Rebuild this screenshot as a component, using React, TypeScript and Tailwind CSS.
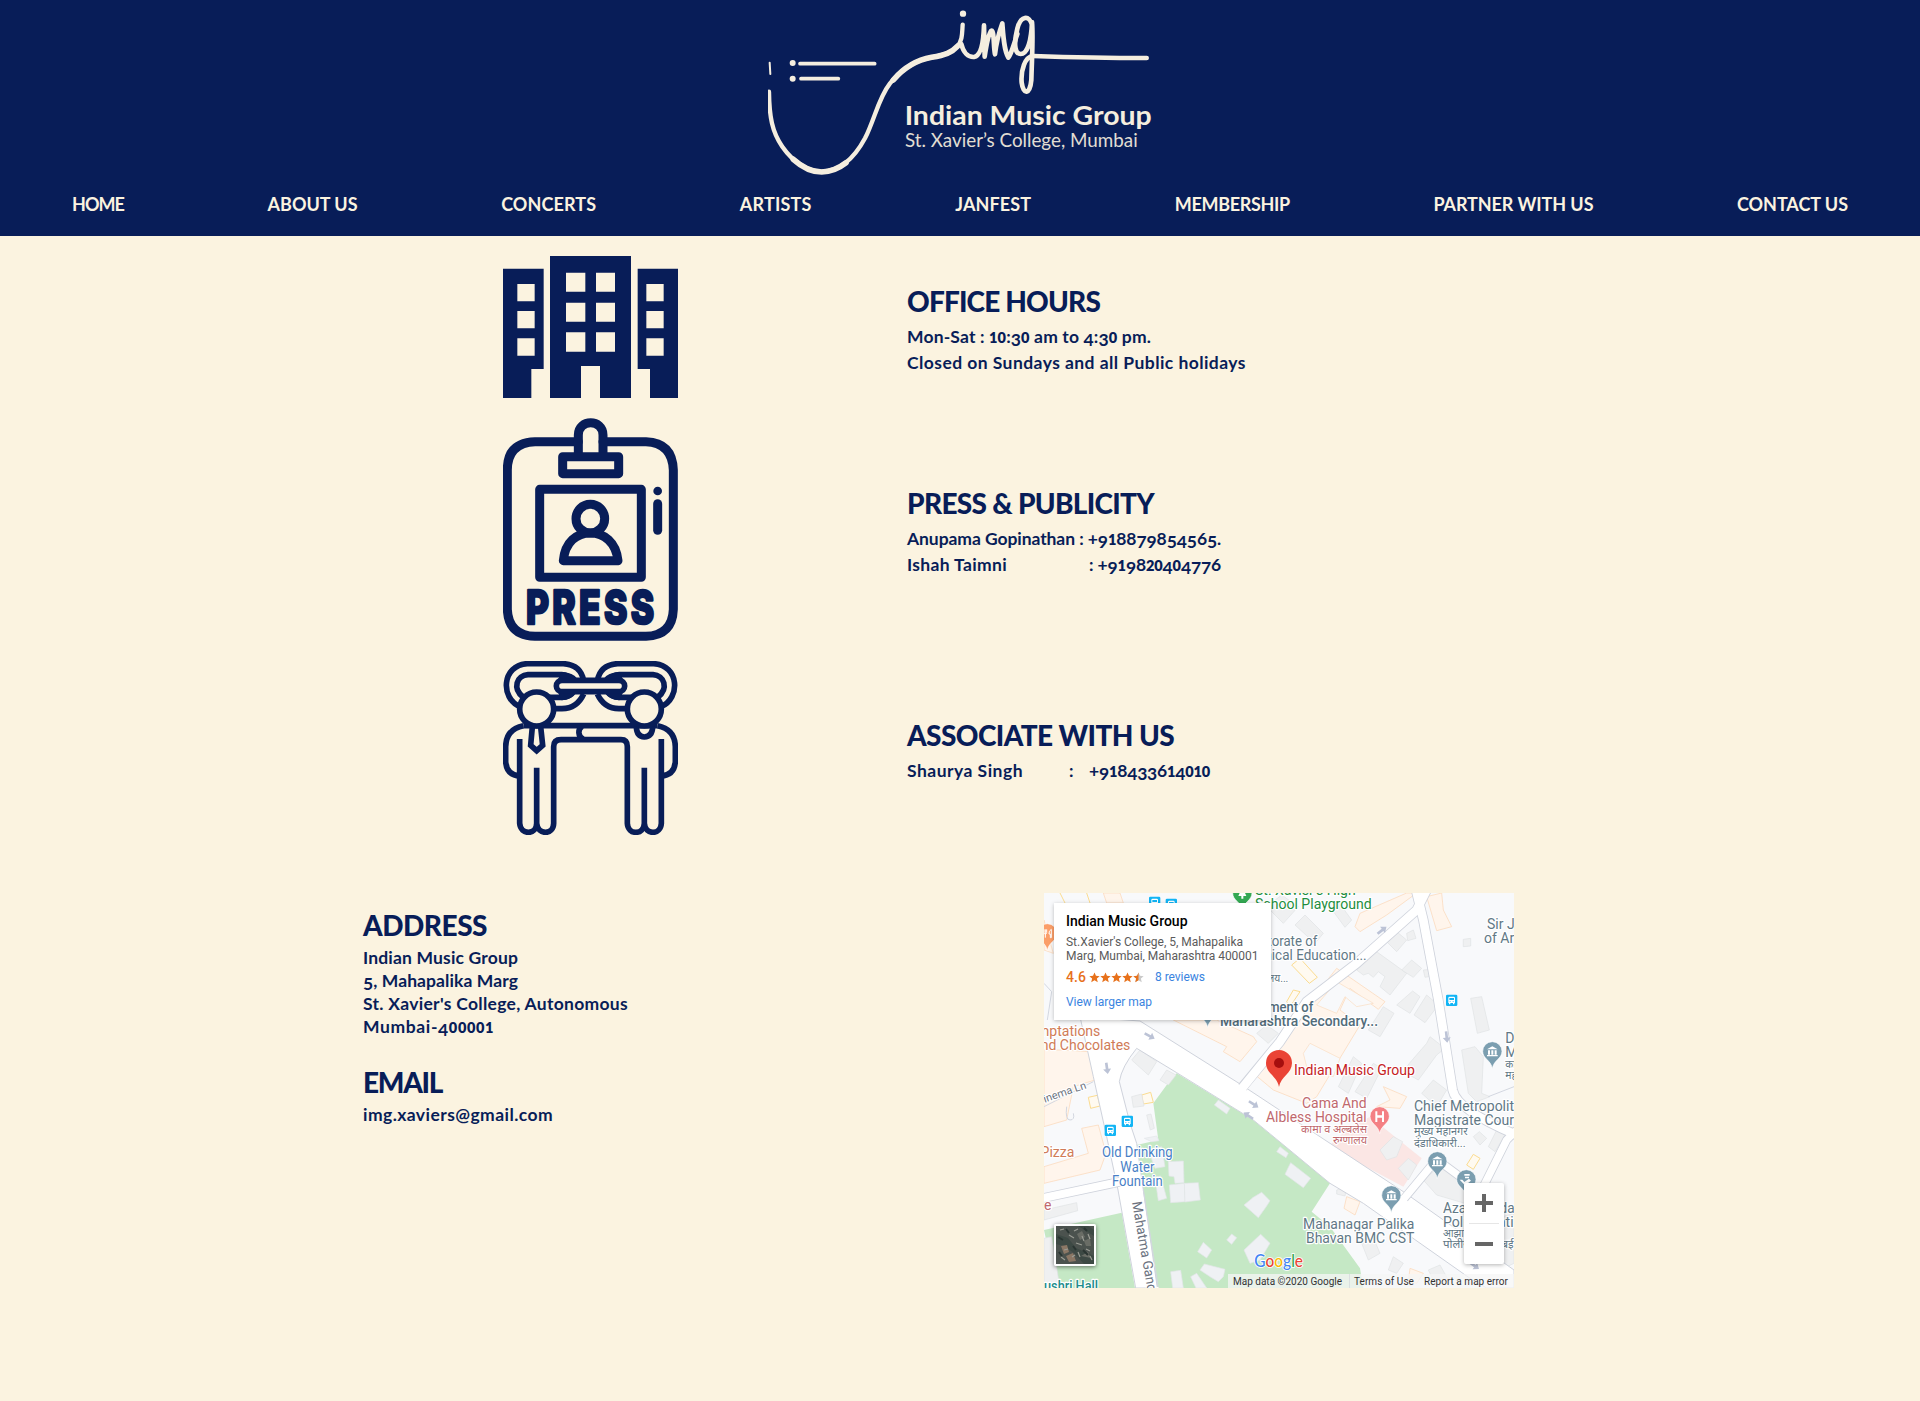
import { useLayoutEffect, useRef, useState, type ReactNode } from "react";

/** Tracks its text so that the line comes out exactly `w` pixels wide. */
function Fit({ w, text, className = "" }: { w: number; text: string; className?: string }) {
  const ref = useRef<HTMLSpanElement>(null);
  const [spacing, setSpacing] = useState(0);
  useLayoutEffect(() => {
    if (ref.current) {
      const natural = ref.current.getBoundingClientRect().width;
      setSpacing((w - natural) / text.length);
    }
  }, [w, text]);
  return (
    <span ref={ref} className={"inline-block whitespace-pre " + className} style={{ letterSpacing: spacing }}>
      {[...text].map((c, i) => {
        if ("012".includes(c)) return <span key={i} className="text-[0.83em] font-extrabold leading-none">{c}</span>;
        if ("34579".includes(c)) return <span key={i} className="align-[-0.17em] leading-none">{c}</span>;
        return c;
      })}
    </span>
  );
}

const NAV: [string, number][] = [
  ["HOME", 52],
  ["ABOUT US", 90],
  ["CONCERTS", 95],
  ["ARTISTS", 72],
  ["JANFEST", 76],
  ["MEMBERSHIP", 115],
  ["PARTNER WITH US", 160],
  ["CONTACT US", 111],
];

function Heading({ text, w }: { text: string; w: number }) {
  return (
    <h2 className="h-[34px] text-[28px] leading-[34px] font-black">
      <Fit text={text} w={w} />
    </h2>
  );
}

function Logo() {
  return (
    <svg className="block h-[175px] w-[384px]" viewBox="54 0 1152 525" fill="none" stroke="#f5eedf" strokeLinecap="round" strokeLinejoin="round">
      <path d="M59 188L61 222" strokeWidth="6" />
      <path d="M57 275C58 350 66 395 97 440C130 487 175 515 215 515C265 514 310 480 345 415C375 355 385 295 420 250C455 207 500 180 545 172C585 165 605 158 622 139C638 120 636 100 638 74" strokeWidth="13" />
      <path d="M130 478C160 505 190 516 215 516C240 515 265 506 288 488M430 240C460 205 500 180 545 172C585 165 605 158 622 139" strokeWidth="17" />
      <path d="M634 132C640 158 655 172 672 171C690 168 700 140 702 76L704 170C710 130 716 100 724 92C733 90 730 140 735 163C740 120 748 95 757 70C760 110 762 150 775 173C785 160 792 130 802 102" strokeWidth="14" />
      <path d="M846 75C838 44 812 46 802 86C792 125 792 162 812 162C834 162 844 118 846 66C850 110 846 165 844 240C840 285 820 285 815 248C812 210 825 170 849 168" strokeWidth="14" />
      <path d="M849 168C940 171 1050 174 1190 174" strokeWidth="14" />
      <circle cx="639" cy="41" r="9.5" fill="#f5eedf" stroke="none" />
      <circle cx="128" cy="189" r="9" fill="#f5eedf" stroke="none" />
      <circle cx="128" cy="236" r="9" fill="#f5eedf" stroke="none" />
      <path d="M150 191H374" strokeWidth="11" />
      <path d="M153 236H265" strokeWidth="11" />
      <g fill="#f5eedf" stroke="none" fontFamily="Lato, sans-serif">
        <text x="464" y="375" fontSize="82" fontWeight="700" textLength="741" lengthAdjust="spacingAndGlyphs">Indian Music Group</text>
        <text x="465" y="442" fontSize="55" fontWeight="400" textLength="698" lengthAdjust="spacingAndGlyphs" opacity="0.92">St. Xavier’s College, Mumbai</text>
      </g>
    </svg>
  );
}

function OfficeIcon() {
  return (
    <svg className="block h-[142px] w-[175px]" viewBox="39 33 525 426" fill="#081d58">
      <path fillRule="evenodd" d="M39 71H161V372H124V459H39ZM82 117V169H134V117ZM82 198V250H134V198ZM82 280V332H134V280Z" />
      <path fillRule="evenodd" d="M180 33H423V459H330V363H273V459H180ZM228 83V140H286V83ZM318 83V140H375V83ZM228 173V230H286V173ZM318 173V230H375V173ZM228 262V320H286V262ZM318 262V320H375V262Z" />
      <path fillRule="evenodd" d="M443 71H564V459H480V372H443ZM469 117V169H521V117ZM469 198V250H521V198ZM469 280V332H521V280Z" />
    </svg>
  );
}

function PressIcon() {
  return (
    <svg className="block h-[223px] w-[175px]" viewBox="39 24 525 669" fill="none" stroke="#081d58" strokeWidth="27" strokeLinejoin="round" strokeLinecap="round">
      <path d="M265 95H135Q52 98 52 180V598Q55 676 135 679H468Q547 676 550 598V180Q547 98 468 95H339" />
      <path d="M265 138V75C265 26 339 26 339 75V138" />
      <rect x="218" y="140" width="168" height="51" />
      <rect x="149" y="238" width="305" height="264" />
      <circle cx="301" cy="326" r="43" />
      <path d="M220 452C225 396 260 369 301 369S378 396 384 452Z" />
      <path d="M503 281V361" />
      <circle cx="503" cy="243" r="13" fill="#081d58" stroke="none" />
      <text x="108" y="642" fontFamily="Inter, sans-serif" fontWeight="800" fontSize="138" letterSpacing="13" strokeWidth="8" fill="#081d58" textLength="394" lengthAdjust="spacingAndGlyphs">PRESS</text>
    </svg>
  );
}

function AssociateIcon() {
  return (
    <svg className="block h-[174px] w-[175px]" viewBox="39 33 525 522" fill="none" stroke="#081d58" strokeWidth="17">
      <path d="M90 170C30 145 35 45 112 41H220C255 43 275 60 281 92M281 132C268 160 245 176 216 176H190" />
      <path d="M513 170C573 145 568 45 491 41H383C348 43 328 60 322 92M322 132C335 160 358 176 387 176H413" />
      <path d="M100 142C66 115 80 76 114 74H215Q235 74 250 92M178 142H215Q235 142 248 128" />
      <path d="M503 142C537 115 523 76 489 74H388Q368 74 353 92M425 142H388Q368 142 355 128" />
      <rect x="199" y="91" width="205" height="34" rx="17" />
      <path d="M215 66Q250 68 262 86H205ZM205 130H258Q245 150 215 151ZM388 66Q353 68 341 86H398ZM398 130H345Q358 150 388 151Z" fill="#081d58" stroke="none" />
      <path d="M100 227Q48 238 47 290V335Q50 376 90 378M503 227Q555 238 556 290V335Q553 376 513 378" />
      <path d="M100 227H503M89 267V520C92 556 139 556 140 520V353M140 520C144 556 190 556 191 520V290Q191 269 213 269H393Q412 269 412 290V520C414 556 461 556 463 520V353M463 520C466 556 512 556 514 520V267M276 229C263 238 263 259 280 268" />
      <path d="M127 230L122 286L140 302L158 286L152 230" />
      <path d="M439 230Q440 260 463 261Q487 260 488 230" />
      <circle cx="140" cy="177" r="51" fill="#fbf3e0" />
      <circle cx="463" cy="177" r="51" fill="#fbf3e0" />
    </svg>
  );
}

function Pin({ x, y, color, children }: { x: number; y: number; color: string; children?: ReactNode }) {
  return (
    <g transform={`translate(${x} ${y})`}>
      <path d="M0 51C-4 25 -29 22 -29 -1A29 29 0 0 1 29 -1C29 22 4 25 0 51Z" fill={color} stroke="#fff" strokeWidth="2" />
      {children}
    </g>
  );
}

const Museum = () => (
  <path d="M-16 -7L0 -16L16 -7ZM-13 -4H-7V9H-13ZM-3 -4H3V9H-3ZM7 -4H13V9H7ZM-16 10H16V14H-16Z" fill="#fff" />
);

function Bus({ x, y }: { x: number; y: number }) {
  return (
    <g transform={`translate(${x} ${y})`}>
      <rect x="-17" y="-17" width="34" height="34" rx="4" fill="#12b5f5" />
      <path fillRule="evenodd" fill="#fff" d="M-10 -7Q-10 -11 -6 -11H6Q10 -11 10 -7V8H8V12H4V8H-4V12H-8V8H-10ZM-7 -7V-1H7V-7ZM-6 3V5H-3V3ZM3 3V5H6V3Z" />
    </g>
  );
}

function Arrow({ x, y, r }: { x: number; y: number; r: number }) {
  return <path transform={`translate(${x} ${y}) rotate(${r})`} d="M-17 -4H2V-12L17 0L2 12V4H-17Z" fill="#bcc3d6" />;
}

function Label({ x, y, w, size = 42, fill = "#617886", anchor = "start", weight = 400, children }: {
  x: number; y: number; w?: number; size?: number; fill?: string; anchor?: "start" | "middle" | "end"; weight?: number; children: ReactNode;
}) {
  return (
    <text x={x} y={y} textLength={w} lengthAdjust="spacingAndGlyphs" fontSize={size} fill={fill} textAnchor={anchor} fontWeight={weight} stroke="#fff" strokeWidth="7" strokeLinejoin="round" paintOrder="stroke">
      {children}
    </text>
  );
}

const BUILDINGS = [
  "M275 510L300 480L350 515L325 555Z", "M360 570L380 540L408 555L385 585Z", "M275 620L305 612L312 648L280 652Z",
  "M320 675L333 672L343 715L331 720Z", "M680 50L725 15L775 50L730 100Z", "M765 105L795 75L850 130L825 160Z",
  "M873 55L895 35L935 90L915 112Z", "M1040 155L1070 125L1100 150L1070 185Z", "M1100 130L1120 120L1128 145L1103 152Z",
  "M950 240L1000 178L1100 250L1050 315L1020 290L1035 260L1015 245L1000 262L985 250L970 255Z",
  "M1085 240L1115 210L1145 235L1120 262Z", "M1070 345L1118 303L1140 320L1110 370Z", "M1122 375L1160 315L1195 345L1155 398Z",
  "M985 420L1030 350L1062 370L1020 440Z", "M1292 325L1325 320L1348 420L1312 430Z", "M1270 148L1292 145L1292 168L1270 170Z",
  "M1108 520L1160 460L1170 440L1215 475L1190 495L1135 570L1090 545Z", "M1265 480L1305 470L1330 500L1325 610L1350 620L1310 635L1285 610Z",
  "M895 590L940 500L965 520L925 610Z", "M945 605L1000 520L1025 535L980 625Z", "M1145 610L1180 570L1220 600L1190 650Z",
  "M650 430L680 405L715 430L685 460Z", "M1020 780L1060 740L1088 755L1070 800L1040 810Z", "M1075 835L1105 805L1130 825L1105 870Z",
  "M1150 870L1210 820L1275 865V940L1190 915Z", "M890 900L920 890L915 918L890 912Z", "M965 1060L1005 1055L1020 1090L985 1110Z",
  "M1060 1100L1090 1120L1070 1150L1045 1140Z", "M1165 1140L1200 1125L1225 1170L1190 1190Z", "M12 960L110 938L113 962L12 990Z",
  "M1320 1000L1422 970V1120L1380 1140Z", "M1345 770L1370 720L1395 735L1365 785Z", "M1300 740L1318 725L1340 745L1320 765Z",
  "M12 1045L35 1040L60 1194H12Z", "M1150 240L1175 238L1178 258L1155 262Z",
];

const PARK_BUILDINGS = [
  "M523 645L535 630L570 655L560 672Z", "M313 745L350 738L357 752L335 755Z", "M325 780L365 770L375 830L345 835Z",
  "M385 815L430 813L432 878L405 880L402 860L387 858Z", "M388 885L433 880L435 935L392 938Z", "M433 880L475 878L481 930L435 936Z",
  "M345 862L362 858L380 925L355 932Z", "M735 853L752 818L812 865L790 893Z", "M612 945L640 922L665 907L690 932L680 948L655 983Z",
  "M612 1080L662 1033L690 1060L660 1110L630 1120Z", "M473 1085L490 1057L515 1080L500 1104Z", "M560 1050L575 1032L590 1043L575 1063Z",
  "M480 1140L493 1122L555 1138L550 1160L535 1175L510 1160Z", "M452 1160L470 1150L500 1194H468Z", "M392 1145L422 1141L430 1194H398Z",
  "M710 785L720 770L745 790L738 803Z",
];

const ORANGE = [
  "M945 110L960 70L1100 9H1130L1040 75L960 125Z", "M1160 20L1205 9L1210 60L1235 110L1190 122Z",
  "M640 550L890 235L1035 335L1015 358L930 295L900 360L960 405L830 620L800 640L700 600Z",
  "M400 390H530L640 440L650 455L600 515L550 485L560 470Z", "M12 480H70L145 485L165 570L100 590L80 690L12 710Z",
  "M125 715L175 705L198 790L180 840L12 880V830L145 790Z", "M920 920L960 935L945 975L912 955Z",
  "M1010 650L1050 630L1030 590L1100 620L1080 655Z", "M1110 1135L1150 1150L1130 1180L1105 1175Z", "M12 90L40 190L12 180Z",
  "M190 9H240L250 39H200Z",
];

function MapDrawing() {
  return (
    <svg className="block h-[395px] w-[470px]" viewBox="12 9 1410 1185" fontFamily='Roboto, "Noto Sans", sans-serif'>
      <rect x="12" y="9" width="1410" height="1185" fill="#f8f9fb" />
      <path d="M12 1020L245 968L285 1194H50Z" fill="#c5e8c5" />
      <path d="M410 550L640 690L870 880L815 965L870 1010L960 1135L970 1194H345L290 765L355 750L340 640L380 585Z" fill="#c5e8c5" />
      <path d="M865 770L920 720L990 680L1145 805L1090 890Z" fill="#fbe6e4" />
      {ORANGE.map((d) => <path key={d} d={d} fill="#fff5ec" stroke="#fbdcc0" strokeWidth="2.5" />)}
      <path d="M830 345L890 275L1000 340L950 350L915 320L890 370Z M790 490L810 460L900 505L880 560L800 530Z" fill="#f8f9fb" stroke="#fbdcc0" strokeWidth="2" />
      <g fill="#fffaf0" stroke="#fbdc90" strokeWidth="3">
        <path d="M755 225L780 205L832 262L808 280Z" /><path d="M740 335L760 300L780 305L750 350Z" />
        <path d="M305 615L332 607L340 637L310 642Z" /><path d="M145 622L172 616L180 648L152 655Z" />
        <path d="M1280 825L1300 793L1320 805L1300 838Z" /><path d="M60 9L75 39M140 9L150 39" />
      </g>
      {BUILDINGS.map((d) => <path key={d} d={d} fill="#eff0f1" stroke="#e0e2e4" strokeWidth="2" />)}
      {PARK_BUILDINGS.map((d) => <path key={d} d={d} fill="#eff1f4" stroke="#e2e5e9" strokeWidth="2" />)}
      <path d="M120 380L160 560L200 740L234 900L287 1194H352L290 760L270 700L238 575Q245 530 290 475L410 548L640 690L870 880L970 940L1290 1165L1340 1194H1422V1140L1090 905L597 580L300 393Z" fill="#fff" stroke="#cfd3dc" strokeWidth="3" />
      <g fill="none" strokeLinejoin="round">
        <g stroke="#cfd3dc">
          <path d="M607 592L720 455L800 335L950 220L1130 60L1160 0" strokeWidth="31" />
          <path d="M1128 0L1150 90L1195 330L1238 600Q1250 660 1430 735" strokeWidth="31" />
          <path d="M1093 925L1190 808L1260 860M1430 720L1400 750L1330 890" strokeWidth="27" />
          <path d="M5 925L240 875" strokeWidth="29" />
        </g>
        <g stroke="#fff">
          <path d="M600 602L720 455L800 335L950 220L1130 60L1160 0" strokeWidth="26" />
          <path d="M1128 0L1150 90L1195 330L1238 600Q1250 660 1430 735" strokeWidth="26" />
          <path d="M1080 940L1190 808L1260 860M1430 720L1400 750L1330 890" strokeWidth="22" />
          <path d="M5 925L245 874" strokeWidth="24" />
        </g>
        <path d="M12 280L35 305L22 390M80 650Q75 690 90 690Q105 690 100 670M12 650L160 575M1345 620L1422 590M310 900L355 1194" stroke="#d3d7e0" strokeWidth="3" />
      </g>
      <Arrow x={329} y={438} r={28} /><Arrow x={201} y={535} r={82} /><Arrow x={641} y={643} r={33} />
      <Arrow x={625} y={677} r={213} /><Arrow x={1026} y={121} r={-38} /><Arrow x={1220} y={441} r={84} /><Arrow x={1303} y={1127} r={35} />
      <Bus x={344} y={37} /><Bus x={394} y={43} /><Bus x={262} y={694} /><Bus x={211} y={721} /><Bus x={1235} y={331} />
      <Pin x={22} y={131} color="#fb9e68"><path d="M-10 -13V-3Q-10 1 -6 1V12M-2 -13V-3Q-2 1 -6 1V-13M12 -13Q4 -9 5 1H9V12H12Z" fill="none" stroke="#fff" strokeWidth="3" /></Pin>
      <Pin x={607} y={10} color="#34a853"><path d="M0 -20L12 8H3V16H-3V8H-12Z" fill="#fff" /></Pin>
      <Pin x={503} y={362} color="#7b9eb0" />
      <Pin x={1357} y={485} color="#7b9eb0"><Museum /></Pin>
      <Pin x={1192} y={815} color="#7b9eb0"><Museum /></Pin>
      <Pin x={1054} y={917} color="#7b9eb0"><Museum /></Pin>
      <Pin x={1279} y={869} color="#7b9eb0"><path d="M-6 -17H10V-12H-6ZM-4 -9H8V-4H-4ZM-20 0L-12 0L-6 7L8 -3L14 3L-4 17Z" fill="#fff" /></Pin>
      <Pin x={1019} y={680} color="#f48084"><path d="M-13 -16H-7V-4H7V-16H13V16H7V3H-7V16H-13Z" fill="#fff" /></Pin>
      <Label x={645} y={16} w={302} fill="#1e8e3e">St. Xavier’s High</Label>
      <Label x={645} y={58} w={350} fill="#1e8e3e">School Playground</Label>
      <Label x={832} y={168} anchor="end" w={240}>Directorate of</Label>
      <Label x={980} y={210} anchor="end" w={394}>Technical Education...</Label>
      <Label x={745} y={277} anchor="end" size={31}>कार्यालय...</Label>
      <Label x={820} y={367} anchor="end" w={252} fill="#526c7a" weight={500}>Department of</Label>
      <Label x={540} y={409} w={474} fill="#526c7a" weight={500}>Maharashtra Secondary...</Label>
      <Label x={1341} y={117}>Sir J</Label>
      <Label x={1332} y={159}>of Art</Label>
      <Label x={1396} y={460}>Dr</Label>
      <Label x={1396} y={501}>Mu</Label>
      <Label x={1396} y={533} size={31}>का</Label>
      <Label x={1396} y={566} size={31}>महा</Label>
      <Label x={181} y={438} anchor="end" fill="#d07b57">Temptations</Label>
      <Label x={271} y={480} anchor="end" w={292} fill="#d07b57">and Chocolates</Label>
      <Label x={103} y={801} anchor="end" fill="#d07b57">Pizza</Label>
      <Label x={12} y={960} fill="#c0686d">e</Label>
      <Label x={292} y={801} anchor="middle" w={212} fill="#4980c6">Old Drinking</Label>
      <Label x={292} y={846} anchor="middle" w={102} fill="#4980c6">Water</Label>
      <Label x={292} y={888} anchor="middle" w={152} fill="#4980c6">Fountain</Label>
      <Label x={980} y={654} anchor="end" w={194} fill="#c0686d">Cama And</Label>
      <Label x={980} y={696} anchor="end" w={302} fill="#c0686d">Albless Hospital</Label>
      <Label x={981} y={729} anchor="end" w={198} size={31} fill="#c0686d">कामा व अल्बलेस</Label>
      <Label x={981} y={763} anchor="end" w={102} size={31} fill="#c0686d">रुग्णालय</Label>
      <Label x={1122} y={663} w={300}>Chief Metropolit</Label>
      <Label x={1122} y={705} w={300}>Magistrate Cour</Label>
      <Label x={1122} y={736} w={161} size={31}>मुख्य महानगर</Label>
      <Label x={1122} y={770} w={155} size={31}>दंडाधिकारी...</Label>
      <Label x={1123} y={1017} anchor="end" w={334}>Mahanagar Palika</Label>
      <Label x={1123} y={1059} anchor="end" w={325}>Bhavan BMC CST</Label>
      <Label x={1209} y={969} w={215}>Azad Maida</Label>
      <Label x={1209} y={1011} w={212}>Police Stati</Label>
      <Label x={1209} y={1042} size={31}>आझाद</Label>
      <Label x={1209} y={1075} w={212} size={31}>पोलीस ठाणे मुंबई</Label>
      <Label x={762} y={555} w={363} fill="#c5221f">Indian Music Group</Label>
      <Label x={12} y={1203} w={162} fill="#218c8a" weight={500}>ushri Hall</Label>
      <g transform="translate(-6 645) rotate(-19)"><Label x={0} y={0} w={155} size={32} fill="#6b7280">Cinema Ln</Label></g>
      <g transform="translate(276 937) rotate(80)"><Label x={0} y={0} w={305} size={41} fill="#6b7280">Mahatma Gandhi</Label></g>
      <path d="M717 591C712 560 678 550 678 519A39 39 0 0 1 756 519C756 550 722 560 717 591Z" fill="#ea4335" />
      <circle cx="717" cy="519" r="15" fill="#a50e0e" />
      <text x="643" y="1131" fontSize="50" fontWeight="500" fontFamily="Lato, sans-serif" textLength="146" lengthAdjust="spacingAndGlyphs" stroke="#fff" strokeWidth="5" paintOrder="stroke">
        <tspan fill="#4285f4">G</tspan><tspan fill="#ea4335">o</tspan><tspan fill="#fbbc05">o</tspan><tspan fill="#4285f4">g</tspan><tspan fill="#34a853">l</tspan><tspan fill="#ea4335">e</tspan>
      </text>
    </svg>
  );
}

const STAR = "M12 1l3.2 7.4 8.1.7-6.1 5.3 1.9 7.9L12 18.1l-7.1 4.2 1.9-7.9-6.1-5.3 8.1-.7z";

function Satellite() {
  return (
    <svg className="block size-full" viewBox="0 0 38 38">
      <rect width="38" height="38" fill="#4b524e" />
      <path d="M0 8L12 12L20 22L38 30V38H28L18 27L8 20L0 18ZM22 0L38 10V4L32 0Z" fill="#3d4944" />
      <path d="M5 20L11 19L13 26L8 28ZM10 30L17 27L20 35L13 36Z" fill="#8b7765" />
      <path d="M21 8L26 5L29 11L24 14ZM28 15L34 12L35 20L30 20ZM25 30L32 26L35 32Z" fill="#6a6d66" />
      <path d="M4 4L8 3M18 5L22 3M13 9L18 12M26 10L28 15M32 8L34 13M20 17L26 19M30 23L34 25M8 24L12 23M5 31L9 34M22 26L24 31M16 31L19 29M34 30L36 34" stroke="#9a9c94" strokeWidth="1.2" />
      <path d="M2 11L7 14M10 3L13 7M28 2L31 5M17 20L20 24M27 24L32 29M3 26L6 30" stroke="#2a3532" strokeWidth="2" />
    </svg>
  );
}

function GoogleMap() {
  return (
    <div className="relative h-[395px] w-[470px] overflow-hidden font-['Roboto'] font-normal">
      <MapDrawing />
      <div className="absolute top-[10px] left-[10px] flex h-[117px] w-[217px] flex-col bg-white pt-[10px] pl-3 text-[12px] leading-[14px] text-[#5b5b5b] shadow-[0_1px_4px_rgba(0,0,0,0.25)]">
        <div className="h-4 text-[14px] leading-4 font-medium text-black"><Plain text="Indian Music Group" w={121.5} /></div>
        <div className="mt-[6px]"><Plain text="St.Xavier's College, 5, Mahapalika" w={177} /></div>
        <div><Plain text="Marg, Mumbai, Maharashtra 400001" w={192.5} /></div>
        <div className="mt-[6px] flex h-[16px] items-center text-[#e7711b]">
          <span className="text-[14px] font-medium"><Plain text="4.6" w={20} /></span>
          <svg className="ml-[3px] h-[11px] w-[55px]" viewBox="0 0 120 24">
            <defs><clipPath id="half"><rect x="96" width="12" height="24" /></clipPath></defs>
            {[0, 24, 48, 72].map((x) => <path key={x} d={STAR} transform={`translate(${x} 0)`} fill="#e7711b" />)}
            <path d={STAR} transform="translate(96 0)" fill="#c9c9c9" />
            <g clipPath="url(#half)"><path d={STAR} transform="translate(96 0)" fill="#e7711b" /></g>
          </svg>
          <span className="ml-[11px] text-[#3a84df]"><Plain text="8 reviews" w={50} /></span>
        </div>
        <div className="mt-[10px] text-[#3a84df]"><Plain text="View larger map" w={86} /></div>
      </div>
      <div className="absolute top-[331px] left-[10px] size-[42px] rounded-[2px] border-2 border-white shadow-[0_1px_4px_rgba(0,0,0,0.5)]">
        <Satellite />
      </div>
      <div className="absolute right-[10px] top-[290px] flex h-[81px] w-10 flex-col items-center rounded-[2px] bg-white text-[#666] shadow-[0_1px_4px_rgba(0,0,0,0.3)]">
        <svg className="h-10 w-10" viewBox="0 0 40 40"><path d="M11 20H29M20 11V29" stroke="#666" strokeWidth="4" /></svg>
        <div className="h-px w-[30px] bg-[#e6e6e6]" />
        <svg className="h-10 w-10" viewBox="0 0 40 40"><path d="M11 20H29" stroke="#666" strokeWidth="4" /></svg>
      </div>
      <div className="absolute right-0 bottom-0 flex h-[14px] w-[286px] bg-[#f5f5f5]/75 pl-[5px] text-[10px] leading-[15px] text-[#333]">
        <div className="w-[116px]"><Plain text="Map data ©2020 Google" w={109} /></div>
        <div className="w-[76px] border-l border-[#dadfe0] pl-1"><Plain text="Terms of Use" w={60} /></div>
        <div className="-ml-px"><Plain text="Report a map error" w={84} /></div>
      </div>
    </div>
  );
}

/** Same as Fit, with lining figures. */
function Plain({ w, text }: { w: number; text: string }) {
  const ref = useRef<HTMLSpanElement>(null);
  const [spacing, setSpacing] = useState(0);
  useLayoutEffect(() => {
    if (ref.current) setSpacing((w - ref.current.getBoundingClientRect().width) / text.length);
  }, [w, text]);
  return <span ref={ref} className="inline-block whitespace-pre" style={{ letterSpacing: spacing }}>{text}</span>;
}

export default function App() {
  return (
    <div className="h-[1401px] w-[1920px] overflow-hidden bg-[#fbf3e0] font-['Lato'] text-[17.5px] font-bold text-[#081d58]">
      <header className="flex h-[236px] flex-col items-center bg-[#081d58] text-[#fbf3e0]">
        <Logo />
        <nav className="mt-[17px] flex w-full justify-between px-[72px] text-[18px] leading-6">
          {NAV.map(([label, w]) => <a key={label} href="#"><Fit text={label} w={w} /></a>)}
        </nav>
      </header>
      <main>
        <section className="mt-5 flex flex-col gap-5 pl-[503px] leading-[26px]">
          <div className="flex h-[142px]">
            <div className="w-[404px]"><OfficeIcon /></div>
            <div className="pt-7">
              <Heading text="OFFICE HOURS" w={193} />
              <p className="mt-[6px] h-[26px]"><Fit text="Mon-Sat : 10:30 am to 4:30 pm." w={244} /></p>
              <p className="h-[26px]"><Fit text="Closed on Sundays and all Public holidays" w={339} /></p>
            </div>
          </div>
          <div className="flex h-[223px]">
            <div className="w-[404px]"><PressIcon /></div>
            <div className="pt-[68px]">
              <Heading text="PRESS & PUBLICITY" w={247} />
              <p className="mt-[6px] h-[26px]"><Fit text="Anupama Gopinathan : +918879854565." w={314} /></p>
              <p className="flex h-[26px]">
                <span className="w-[182px]"><Fit text="Ishah Taimni" w={100} /></span>
                <Fit text=": +919820404776" w={132} />
              </p>
            </div>
          </div>
          <div className="flex h-[174px]">
            <div className="w-[404px]"><AssociateIcon /></div>
            <div className="pt-[57px]">
              <Heading text="ASSOCIATE WITH US" w={267} />
              <p className="mt-[6px] flex h-[26px]">
                <span className="w-[162px]"><Fit text="Shaurya Singh" w={116} /></span>
                <span className="w-5">:</span>
                <Fit text="+918433614010" w={121} />
              </p>
            </div>
          </div>
        </section>
        <section className="mt-[58px] flex pl-[363px] leading-[23px]">
          <div className="w-[681px] pt-[15px]">
            <Heading text="ADDRESS" w={124} />
            <address className="mt-1 flex flex-col not-italic">
              <span className="h-[23px]"><Fit text="Indian Music Group" w={155} /></span>
              <span className="h-[23px]"><Fit text="5, Mahapalika Marg" w={155} /></span>
              <span className="h-[23px]"><Fit text="St. Xavier's College, Autonomous" w={265} /></span>
              <span className="h-[23px]"><Fit text="Mumbai-400001" w={131} /></span>
            </address>
            <div className="mt-[27px]"><Heading text="EMAIL" w={79} /></div>
            <p className="mt-1 h-[23px]"><Fit text="img.xaviers@gmail.com" w={190} /></p>
          </div>
          <GoogleMap />
        </section>
      </main>
    </div>
  );
}
